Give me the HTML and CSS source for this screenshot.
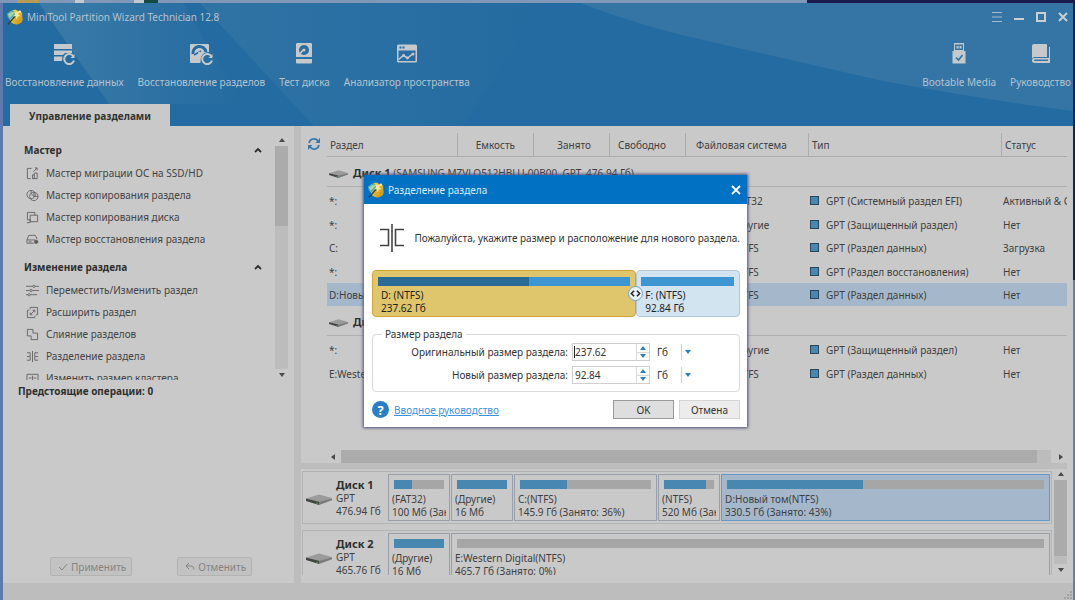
FILE: index.html
```html
<!DOCTYPE html>
<html lang="ru">
<head>
<meta charset="utf-8">
<title>MiniTool Partition Wizard Technician 12.8</title>
<link rel="stylesheet" href="styles.css">
</head>
<body>
<svg class="defs" width="0" height="0" aria-hidden="true">
  <defs>
    <linearGradient id="gold" x1="0" y1="0" x2="1" y2="1"><stop offset="0" stop-color="#f4e06a"/><stop offset="1" stop-color="#c98f08"/></linearGradient>
    <linearGradient id="sheenA" x1="0" y1="0" x2="1" y2="0"><stop offset="0" stop-color="#4280aa"/><stop offset="1" stop-color="#4280aa" stop-opacity="0"/></linearGradient>
    <symbol id="logo" viewBox="0 0 18 18">
      <ellipse cx="10.500" cy="12" rx="7" ry="5.500" fill="url(#gold)"/>
      <path d="M3 3 9 .5l8 3.500.5 8-6 4-6-2z" fill="url(#gold)"/>
      <path d="M0 5 6 1.500l5 4L3 12Q0 9 0 5z" fill="#57a9bd"/>
      <path d="M1 6q4-4 8-2l-6 6z" fill="#a6d79a"/>
      <path d="M1 17.500 10.500 6.500" stroke="#3a4038" stroke-width="1.500"/>
      <path d="m10 1 1 3 3-1-1.500 3 2.500 2-3 .5L11 12l-1-3.500L7 8l2.300-2L8 3l2 1z" fill="#f5eb9a"/>
      <circle cx="14.500" cy="3" r="1.300" fill="#f8f2bb"/>
    </symbol>
    <symbol id="drive" viewBox="0 0 26 11">
      <path d="m0 4.500 13-4 13 3.500-13 4z" fill="#9b9b9b"/>
      <path d="m0 4.500 13 3.200V11L0 7z" fill="#424542"/>
      <path d="m13 7.700 13-3.500v2L13 11z" fill="#7b7b7b"/>
      <path d="m10 8.500 2 .5v1l-2-.5z" fill="#4f9a5c"/>
    </symbol>
    <symbol id="up" viewBox="0 0 6 4"><path d="M3 0 6 4H0z" fill="currentColor"/></symbol>
    <symbol id="down" viewBox="0 0 6 4"><path d="M0 0h6L3 4z" fill="currentColor"/></symbol>
    <symbol id="chevron" viewBox="0 0 8 6"><path d="m1 5 3-3 3 3" fill="none" stroke="currentColor" stroke-width="1.800"/></symbol>
  </defs>
</svg>

<div class="window">
  <header class="top">
    <svg class="sheen" viewBox="0 0 1070 123" preserveAspectRatio="none" aria-hidden="true">
      <path d="M36 0 106 101H240L180 0z" fill="url(#sheenA)" opacity=".75"/>
      <path d="M197 0 311 123H460L540 0z" fill="url(#sheenA)" opacity=".4"/>
      <path d="M577 0Q640 24 700 37L880 78Q990 98 1070 108V0z" fill="#3475a6"/>
    </svg>
    <div class="titlebar">
      <svg class="logo"><use href="#logo"/></svg>
      <h1 class="title">MiniTool Partition Wizard Technician 12.8</h1>
      <div class="winctl">
        <button type="button" aria-label="Меню"><svg viewBox="0 0 10 10"><path d="M0 .5h10M0 5h10M0 9.500h10" stroke="#a9bccb" fill="none"/></svg></button>
        <button type="button" aria-label="Свернуть"><svg viewBox="0 0 10 10"><path d="M0 7h10" stroke="#c9ced2" stroke-width="2"/></svg></button>
        <button type="button" aria-label="Развернуть"><svg viewBox="0 0 10 10"><path d="M1 1h8v8H1z" stroke="#c9ced2" stroke-width="2" fill="none"/></svg></button>
        <button type="button" aria-label="Закрыть"><svg viewBox="0 0 10 10"><path d="m1 1 8 8M9 1 1 9" stroke="#c9ced2" stroke-width="2"/></svg></button>
      </div>
    </div>
    <nav class="toolbar">
      <button type="button" class="tool">
        <svg viewBox="0 0 22 22"><g fill="#c6c9cb"><path d="M1 1h18v5H1zM1 7.500h18V10H12l-2 2H1zM1 13.500h8.500L9 18H1z"/></g><path d="M20.500 13.500a5 5 0 1 0 .5 4" fill="none" stroke="#c6c9cb" stroke-width="2"/><path d="M21.500 11v4h-4z" fill="#c6c9cb"/></svg>
        <span>Восстановление данных</span></button>
      <button type="button" class="tool">
        <svg viewBox="0 0 24 22"><path d="M1 2q0-1 1-1h17q1 0 1 1v7q-9 0-8.500 11H2q-1 0-1-1z" fill="#c6c9cb"/><path d="M4 11a6.500 6.500 0 0 1 13-2" fill="none" stroke="#246ba1" stroke-width="3"/><path d="m5 12 7-4" stroke="#246ba1" stroke-width="1.500"/><circle cx="10.500" cy="10" r="1.500" fill="#c6c9cb"/><path d="M22.500 13.500a5 5 0 1 0 .5 4" fill="none" stroke="#c6c9cb" stroke-width="2"/><path d="M23.500 11v4h-4z" fill="#c6c9cb"/></svg>
        <span>Восстановление разделов</span></button>
      <button type="button" class="tool">
        <svg viewBox="0 0 18 22"><path d="M1 1q0-1 1-1h14q1 0 1 1v13H1zM1 16h16v3.500q0 1-1 1H2q-1 0-1-1z" fill="#c6c9cb"/><circle cx="9" cy="7" r="5" fill="#2a6d9f"/><circle cx="9" cy="7" r="1.500" fill="#c6c9cb"/><path d="m4 12 4-5" stroke="#c6c9cb" stroke-width="1.500"/></svg>
        <span>Тест диска</span></button>
      <button type="button" class="tool">
        <svg viewBox="0 0 22 22"><path d="M1 3q0-1.500 1.500-1.500h17Q21 1.500 21 3v15q0 1.500-1.500 1.500h-17Q1 19.500 1 18zM2.500 7.500V18h17V7.500z" fill="#c6c9cb" fill-rule="evenodd"/><path d="M3.500 3.500h2v2h-2zM6.500 3.500h2v2h-2z" fill="#2a6d9f"/><path d="m2.500 16.500 5-4 4 2.500 5-4" fill="none" stroke="#c6c9cb" stroke-width="1.600"/><circle cx="7.500" cy="12.500" r="1.400" fill="#c6c9cb"/><circle cx="11.500" cy="15" r="1.400" fill="#c6c9cb"/><circle cx="17" cy="11" r="1.500" fill="#c6c9cb"/></svg>
        <span>Анализатор пространства</span></button>
      <span class="spacer"></span>
      <button type="button" class="tool">
        <svg viewBox="0 0 16 22"><path d="M3 0h10v8h1.500v12.500h-13V8H3z" fill="#c6c9cb"/><path d="M4 1.500h8V7H4z" fill="#3475a6"/><path d="M5.500 3h2v2.500h-2zM8.500 3h2v2.500h-2z" fill="#c6c9cb"/><path d="m5 14.500 2.500 2.500 4-5" fill="none" stroke="#3475a6" stroke-width="1.700"/></svg>
        <span>Bootable Media</span></button>
      <button type="button" class="tool">
        <svg viewBox="0 0 20 22"><path d="M1 3Q1 1 3 1h12q1 0 1 1v12H4q-3 0-3 3z" fill="#c6c9cb"/><path d="M3.500 15H18V4h1v16H4q-3 0-3-2.500T3.500 15z" fill="#c6c9cb"/><path d="M3.500 16.500H17v1.500H3.500q-1-.7 0-1.500z" fill="#3475a6"/></svg>
        <span>Руководство</span></button>
    </nav>
    <div class="tab">Управление разделами</div>
  </header>

  <main class="body">
    <aside class="side">
      <div class="sidescroll">
        <div class="sidelist">
          <section>
            <h2>Мастер <svg><use href="#chevron"/></svg></h2>
            <a href="#m1"><svg viewBox="0 0 14 14"><path d="M6 1.500H1.500v11H5M7 12.500V8.500h2v4zM9 8.500V6.500h3v6H7M8 5l4-4M9.500 1H12v2.500"/></svg>Мастер миграции ОС на SSD/HD</a>
            <a href="#m2"><svg viewBox="0 0 14 14"><circle cx="5.500" cy="6" r="4.500"/><circle cx="8.500" cy="8" r="4.500"/><path d="M8.500 8V3.500M8.500 8H13M8.500 8 5.500 5V1.500"/></svg>Мастер копирования раздела</a>
            <a href="#m3"><svg viewBox="0 0 14 14"><path d="M4.500 9.500H1.500v-8h8v3M4.500 4.500h8v7h-8zM1 12.500h3.500v-3M8 11.500"/></svg>Мастер копирования диска</a>
            <a href="#m4"><svg viewBox="0 0 14 14"><path d="M1 7.500 3 2.500h7l2 4M1 7.500h9v1M1 7.500v3.500h8M3 9.500h3"/><circle cx="11" cy="9.500" r="1.800" fill="#555"/></svg>Мастер восстановления раздела</a>
          </section>
          <section>
            <h2>Изменение раздела <svg><use href="#chevron"/></svg></h2>
            <a href="#i1"><svg viewBox="0 0 14 14"><path d="M0 2.500h7M10 2.500h4M0 7h4M7 7h7M0 11.500h2M5 11.500h7"/><circle cx="8.500" cy="2.500" r="1.200"/><circle cx="5.500" cy="7" r="1.200"/><circle cx="3.500" cy="11.500" r="1.200"/></svg>Переместить/Изменить раздел</a>
            <a href="#i2"><svg viewBox="0 0 14 14"><path d="M4.500 3.500v-2h8v8h-2M3.500 4.500h-2v8h8v-2M5 9l4.500-4.500M7 4.500h2.500V7M4.500 7v2.500H7"/></svg>Расширить раздел</a>
            <a href="#i3"><svg viewBox="0 0 14 14"><path d="M1.500 1.500h6v4h5v7h-7v-4h-4z"/></svg>Слияние разделов</a>
            <a href="#i4"><svg viewBox="0 0 14 14"><path d="M7 1v12M1 3h3.500v8H1M13 3H9.500v8H13M1 7h3M10 7h3"/></svg>Разделение раздела</a>
            <a href="#i5"><svg viewBox="0 0 14 14"><path d="M1 12V2.500h12V12M3 6.500h3M7 4v5M8 6.500h3"/></svg>Изменить размер кластера</a>
          </section>
        </div>
        <div class="vbar">
          <svg><use href="#up"/></svg><div class="track"><div class="thumb side-thumb"></div></div><svg><use href="#down"/></svg>
        </div>
      </div>
      <p class="pending">Предстоящие операции: 0</p>
      <div class="actions">
        <button type="button" disabled><svg viewBox="0 0 10 10"><path d="m1 5 3 3 5-6"/></svg>Применить</button>
        <button type="button" disabled><svg viewBox="0 0 10 10"><path d="M1 4h5q3 0 3 3.500M4 1 1 4l3 3"/></svg>Отменить</button>
      </div>
    </aside>

    <div class="main">
      <div class="listing">
        <button type="button" class="refresh" aria-label="Обновить"><svg viewBox="0 0 14 14"><path d="M2 6a5 5 0 0 1 9-2M12 8a5 5 0 0 1-9 2" fill="none" stroke="#3579ae" stroke-width="1.600"/><path d="M13 1v5H8.500zM1 13V8h4.500z" fill="#3579ae"/></svg></button>
        <table class="parts">
          <colgroup><col class="c1"><col class="c2"><col class="c2"><col class="c2"><col class="c3"><col class="c4"><col class="c5"></colgroup>
          <thead><tr><th>Раздел</th><th class="num">Емкость</th><th class="num">Занято</th><th>Свободно</th><th>Файловая система</th><th>Тип</th><th>Статус</th></tr></thead>
          <tbody>
            <tr class="group"><td colspan="7"><svg><use href="#drive"/></svg><b>Диск 1</b> (SAMSUNG MZVLQ512HBLU-00B00, GPT, 476.94 Гб)</td></tr>
            <tr><td>*:</td><td></td><td></td><td></td><td>FAT32</td><td><i></i>GPT (Системный раздел EFI)</td><td>Активный &amp; Системный</td></tr>
            <tr><td>*:</td><td></td><td></td><td></td><td>Другие</td><td><i></i>GPT (Защищенный раздел)</td><td>Нет</td></tr>
            <tr><td>C:</td><td></td><td></td><td></td><td>NTFS</td><td><i></i>GPT (Раздел данных)</td><td>Загрузка</td></tr>
            <tr><td>*:</td><td></td><td></td><td></td><td>NTFS</td><td><i></i>GPT (Раздел восстановления)</td><td>Нет</td></tr>
            <tr class="sel"><td>D:Новый том</td><td></td><td></td><td></td><td>NTFS</td><td><i></i>GPT (Раздел данных)</td><td>Нет</td></tr>
          </tbody>
          <tbody>
            <tr class="group"><td colspan="7"><svg><use href="#drive"/></svg><b>Диск 2</b></td></tr>
            <tr><td>*:</td><td></td><td></td><td></td><td>Другие</td><td><i></i>GPT (Защищенный раздел)</td><td>Нет</td></tr>
            <tr><td>E:Western Digital</td><td></td><td></td><td></td><td>NTFS</td><td><i></i>GPT (Раздел данных)</td><td>Нет</td></tr>
          </tbody>
        </table>
      </div>
      <div class="hbar"><svg viewBox="0 0 4 6"><path d="M4 0v6L0 3z"/></svg><div class="htrack"><div class="hthumb"></div></div><svg viewBox="0 0 4 6"><path d="M0 0v6l4-3z"/></svg></div>
      <div class="map">
        <div class="disks">
          <div class="disk">
            <div class="info"><svg><use href="#drive"/></svg><div><b>Диск 1</b><br>GPT<br>476.94 Гб</div></div>
            <div class="blk small"><div class="bar"><div style="width:35%"></div></div>(FAT32)<br>100 Мб (Занято: 35%)</div>
            <div class="blk small"><div class="bar"><div style="width:100%"></div></div>(Другие)<br>16 Мб</div>
            <div class="blk mid"><div class="bar"><div style="width:36%"></div></div>C:(NTFS)<br>145.9 Гб (Занято: 36%)</div>
            <div class="blk small"><div class="bar"><div style="width:83%"></div></div>(NTFS)<br>520 Мб (Занято: 83%)</div>
            <div class="blk big active"><div class="bar"><div style="width:43%"></div></div>D:Новый том(NTFS)<br>330.5 Гб (Занято: 43%)</div>
          </div>
          <div class="disk">
            <div class="info"><svg><use href="#drive"/></svg><div><b>Диск 2</b><br>GPT<br>465.76 Гб</div></div>
            <div class="blk small"><div class="bar"><div style="width:100%"></div></div>(Другие)<br>16 Мб</div>
            <div class="blk big"><div class="bar"><div style="width:0%"></div></div>E:Western Digital(NTFS)<br>465.7 Гб (Занято: 0%)</div>
          </div>
        </div>
        <div class="vbar">
          <svg><use href="#up"/></svg><div class="track"><div class="thumb map-thumb"></div></div><svg><use href="#down"/></svg>
        </div>
      </div>
    </div>
  </main>
  <footer class="status"><svg viewBox="0 0 8 8"><path d="M6 0h2v2H6zM3 3h2v2H3zM6 3h2v2H6zM0 6h2v2H0zM3 6h2v2H3zM6 6h2v2H6z" fill="#a3a3a3"/></svg></footer>
</div>

<dialog class="dlg" open aria-labelledby="dlgtitle">
  <div class="dlgbar">
    <svg class="logo"><use href="#logo"/></svg>
    <h2 id="dlgtitle">Разделение раздела</h2>
    <button type="button" aria-label="Закрыть"><svg viewBox="0 0 10 10"><path d="m1 1 8 8M9 1 1 9" stroke="#fff" stroke-width="1.800"/></svg></button>
  </div>
  <form class="dlgbody">
    <div class="intro">
      <svg viewBox="0 0 26 28"><path d="M13 0v28M1 5.500h8.500v16H1M25 5.500h-8.500v16H25" fill="none" stroke="#454545" stroke-width="1.600"/></svg>
      <p>Пожалуйста, укажите размер и расположение для нового раздела.</p>
    </div>
    <div class="split">
      <div class="piece old"><div class="bar"><div style="width:60%"></div></div>D: (NTFS)<br>237.62 Гб</div>
      <div class="piece new"><div class="bar"></div>F: (NTFS)<br>92.84 Гб
        <button type="button" class="grip" aria-label="Переместить границу"><svg viewBox="0 0 14 14"><path d="m5.500 4-3 3 3 3M8.500 4l3 3-3 3" fill="none" stroke="#222" stroke-width="1.600"/></svg></button>
      </div>
    </div>
    <fieldset>
      <legend>Размер раздела</legend>
      <div class="field"><label for="orig">Оригинальный размер раздела:</label>
        <div class="spin"><input id="orig" class="caret" type="text" value="237.62"><div class="steps"><button type="button" aria-label="Больше"><svg><use href="#up"/></svg></button><button type="button" aria-label="Меньше"><svg><use href="#down"/></svg></button></div></div>
        <div class="unit"><select aria-label="Единица исходного размера"><option>Гб</option></select><svg><use href="#down"/></svg></div></div>
      <div class="field"><label for="fresh">Новый размер раздела:</label>
        <div class="spin"><input id="fresh" type="text" value="92.84"><div class="steps"><button type="button" aria-label="Больше"><svg><use href="#up"/></svg></button><button type="button" aria-label="Меньше"><svg><use href="#down"/></svg></button></div></div>
        <div class="unit"><select aria-label="Единица нового размера"><option>Гб</option></select><svg><use href="#down"/></svg></div></div>
    </fieldset>
    <div class="dlgfoot">
      <span class="help">?</span><a href="#help">Вводное руководство</a>
      <button type="submit" class="ok">OK</button><button type="button">Отмена</button>
    </div>
  </form>
</dialog>
</body>
</html>
```

FILE: styles.css
```css
* { box-sizing: border-box; }
html, body { height: 100%; }
body {
  margin: 0;
  padding: 3px 2px 0 3px;
  min-height: 600px;
  display: flex;
  font: 10px/14px "Noto Sans", "Open Sans", sans-serif;
  color: #3f3f3f;
  background:
    linear-gradient(90deg, #8197b8 17px, #b99a55 17px 39px, #8197b8 39px 75px, #c3c9d0 75px 84px, #8197b8 84px 134px, #c3c9d0 134px 144px, #134a42 144px 158px, #8197b8 158px 807px, #1b1b50 807px) 0 0 / 100% 3px no-repeat,
    linear-gradient(#1f2158 280px, #6a7cab 280px) 100% 0 / 2px 100% no-repeat,
    #6079ac;
}
button, input, select { font: inherit; color: inherit; padding: 0; margin: 0; border: 0; background: none; }
h1, h2, p { margin: 0; font-size: inherit; }
svg { display: block; flex: none; }
.defs { position: absolute; }

.window { flex: 1; min-width: 0; display: flex; flex-direction: column; background: #c9c9c9; }
.top { position: relative; height: 123px; flex: none; display: flex; flex-direction: column; background: #246ba1; color: #b4c3ce; }
.top > :not(.sheen) { position: relative; }
.sheen { position: absolute; inset: 0; width: 100%; height: 100%; }
.titlebar { display: flex; align-items: center; height: 27px; padding: 0 5px 0 4px; gap: 4px; }
.logo { width: 16px; height: 16px; }
.title { font-weight: 400; flex: 1; }
.winctl { display: flex; gap: 12px; }
.winctl svg { width: 10px; height: 10px; }
.toolbar { display: flex; gap: 14px; padding: 13px 2px 0; flex: 1; }
.tool { display: flex; flex-direction: column; align-items: center; gap: 10px; height: 46px; white-space: nowrap; }
.tool svg { height: 22px; }
.spacer { flex: 1; }
.tab { align-self: flex-start; margin-left: 7px; width: 160px; height: 22px; line-height: 24px; text-align: center; font-weight: 700; color: #333; background: #c9c9c9; }

.body { flex: 1; min-height: 0; display: flex; }
.side { width: 298px; flex: none; border-right: 7px solid #bdbdbd; padding-top: 9px; display: flex; flex-direction: column; }
.sidescroll { display: flex; height: 245px; padding-right: 6px; }
.sidelist { flex: 1; overflow: hidden; padding: 4px 13px 0 21px; }
.sidelist h2 { display: flex; justify-content: space-between; align-items: center; height: 22px; color: #2f2f2f; }
.sidelist h2 svg { width: 8px; height: 6px; }
.sidelist section { margin-bottom: 6px; }
.sidelist a { display: flex; align-items: center; gap: 7px; height: 22px; padding-left: 2px; color: #444; text-decoration: none; white-space: nowrap; }
.sidelist a svg { width: 13px; height: 13px; fill: none; stroke: #666; stroke-width: 1; }
.sidelist h2 + a { margin-top: 1px; }
.vbar { width: 13px; flex: none; display: flex; flex-direction: column; align-items: center; gap: 4px; padding: 3px 0; color: #4a4a4a; }
.vbar > svg { width: 6px; height: 4px; }
.track { flex: 1; width: 100%; background: #bcbcbc; }
.thumb { background: #ababab; }
.side-thumb { height: 36%; }
.map-thumb { height: 91%; }
.pending { margin: 4px 0 0 15px; font-weight: 700; color: #2f2f2f; }
.actions { display: flex; gap: 45px; margin: auto 0 7px 47px; }
.actions button { display: flex; align-items: center; gap: 3px; height: 19px; padding: 1px 5px 0 7px; border: 1px solid #b3b3b3; border-radius: 2px; background: #c2c2c2; color: #858585; }
.actions svg { width: 10px; height: 10px; fill: none; stroke: #858585; stroke-width: 1; }

.main { flex: 1; min-width: 0; display: flex; flex-direction: column; padding-right: 6px; }
.listing { flex: 1; min-height: 0; display: flex; overflow: hidden; padding-top: 7px; }
.refresh { width: 26px; height: 22px; flex: none; display: grid; place-items: center; }
.refresh svg { width: 14px; height: 14px; }
.parts { width: 100%; table-layout: fixed; border-collapse: separate; border-spacing: 0; align-self: flex-start; }
.c1 { width: 130px; } .c2 { width: 76px; } .c3 { width: 123px; } .c4 { width: 193px; }
.parts th { height: 24px; padding: 0 8px; text-align: left; font-weight: 400; border-bottom: 1px solid #adadad; border-left: 1px solid #adadad; white-space: nowrap; }
.parts th:first-child { border-left: 0; padding-left: 3px; }
.parts th:last-child { padding: 0 0 0 3px; }
.parts th:nth-child(5) { padding-left: 10px; }
.parts th:nth-child(6) { padding-left: 3px; }
.parts th.num { padding-right: 18px; text-align: right; }
.parts td { height: 23px; padding: 0 0 0 2px; white-space: nowrap; overflow: hidden; }
.parts td:nth-child(5) { padding-left: 50px; }
.parts tr:nth-child(2) td { height: 26px; padding-top: 1px; }
.parts tr:nth-child(4) td { height: 24px; }
.parts i { display: inline-block; width: 9px; height: 9px; margin: 0 7px 0 0; border: 1px solid #2b4658; background: #4887b0; }
.parts .group td { height: 30px; padding: 3px 0 0 2px; border-bottom: 1px solid #b0b0b0; }
.group svg { display: inline-block; vertical-align: -1px; width: 19px; height: 8px; margin-right: 5px; }
.parts b { color: #2f2f2f; font-size: 11px; }
.sel td { background: #a5b8cb; }

.hbar { display: flex; align-items: center; gap: 6px; height: 19px; padding-left: 30px; border-bottom: 6px solid #bdbdbd; }
.hbar svg { width: 4px; height: 6px; fill: #4a4a4a; }
.hbar svg:last-child { margin: 0 4px 0 2px; }
.htrack { flex: 1; height: 13px; background: #bcbcbc; }
.hthumb { width: 98%; height: 13px; background: #ababab; }
.map { display: flex; gap: 2px; height: 106px; margin-bottom: 8px; padding-left: 1px; }
.disks { flex: 1; min-width: 0; overflow: hidden; padding-top: 2px; }
.disk { display: flex; gap: 1px; height: 53px; margin-bottom: 6px; padding: 2px 1px; border: 1px solid #b1b3b5; }
.info { width: 83px; flex: none; display: flex; align-items: center; gap: 4px; padding-left: 2px; }
.info svg { width: 26px; height: 11px; margin-top: 4px; }
.info div, .blk { white-space: nowrap; }
.info div { line-height: 13px; }
.info b { color: #2f2f2f; font-size: 11px; }
.blk { min-width: 0; overflow: clip; overflow-clip-margin: content-box; padding: 5px 3px 0; border: 1px solid #999fa9; line-height: 13px; }
.blk .bar { height: 9px; margin: 0 2px 4px; background: #a6a6a6; }
.blk .bar div { height: 100%; background: #4887b0; }
.small { width: 62px; flex: none; }
.mid { flex: 141 1 0; }
.big { flex: 335 1 0; }
.active { background: #a5b8cb; border-color: #649ac7; }
.status { height: 17px; flex: none; display: flex; align-items: flex-end; justify-content: flex-end; background: #bdbdbd; }
.status svg { width: 8px; height: 8px; margin: 1px; }

.dlg { position: absolute; left: 364px; top: 175px; width: 383px; margin: 0; padding: 0; border: 0; background: #fff; color: #333; box-shadow: 0 0 3px 1px #4c4c78; }
.dlgbar { display: flex; align-items: center; gap: 4px; height: 29px; padding: 0 6px 0 4px; background: #0172c3; color: #d9ebf8; }
.dlgbar h2 { flex: 1; font-weight: 400; }
.dlgbar button svg { width: 10px; height: 10px; }
.dlgbody { padding: 20px 7px 8px 8px; }
.intro { display: flex; align-items: center; justify-content: space-between; padding-left: 7px; height: 28px; white-space: nowrap; }
.intro svg { width: 26px; height: 28px; }
.split { display: flex; margin-top: 18px; height: 47px; line-height: 13px; color: #222; }
.piece { position: relative; padding: 6px 5px 0; border: 1px solid; border-radius: 4px; }
.piece .bar { height: 9px; margin-bottom: 3px; background: #3d96d2; }
.old { flex: 73 1 0; padding-left: 8px; background: #dfc66c; border-color: #d3a43c; }
.old .bar { margin-left: -3px; }
.old .bar div { height: 100%; background: #2a6b96; }
.new { flex: 26 1 0; padding-left: 8px; background: #d1e4ef; border-color: #b3c7d9; }
.new .bar { margin-left: -4px; }
.grip { position: absolute; left: -9px; top: 15px; width: 15px; height: 15px; border-radius: 50%; border: 1px solid #7ba2bd; background: #e6f1f8; }
fieldset { margin: 10px 0 0; padding: 2px 44px 7px 0; border: 1px solid #d9d9d9; border-radius: 4px; min-width: 0; }
legend { margin-left: 9px; padding: 0 3px; line-height: 14px; }
.field { display: flex; align-items: center; justify-content: flex-end; height: 18px; gap: 4px; }
.field + .field { margin-top: 5px; }
.spin { display: flex; width: 78px; height: 18px; border: 1px solid #cfcfcf; }
.spin input { flex: 1; min-width: 0; padding-left: 2px; outline: 0; background: linear-gradient(#222, #222) 1px 50% / 0 12px no-repeat; }
.spin .caret { background-size: 1px 12px; }
.steps { width: 13px; display: flex; flex-direction: column; border-left: 1px solid #d9d9d9; }
.steps button { flex: 1; display: grid; place-items: center; color: #2a7fc4; }
.steps button + button { border-top: 1px solid #d9d9d9; }
.steps svg, .unit svg { width: 6px; height: 4px; }
.unit { display: flex; align-items: center; width: 38px; margin-left: 3px; color: #2a7fc4; }
.unit select { appearance: none; width: 25px; height: 16px; margin-right: 3px; border-right: 1px solid #d0d0d0; color: #333; }
.dlgfoot { display: flex; align-items: center; gap: 5px; margin-top: 8px; height: 19px; }
.help { display: grid; place-items: center; width: 17px; height: 17px; border-radius: 50%; background: #2a7fc4; color: #fff; font-size: 13px; font-weight: 700; }
.dlgfoot a { flex: 1; color: #3e93e0; }
.dlgfoot button { width: 61px; height: 19px; border: 1px solid #d5d5d5; background: #ececec; }
.dlgfoot .ok { border-color: #9a9a9a; background: #dedede; }
```
